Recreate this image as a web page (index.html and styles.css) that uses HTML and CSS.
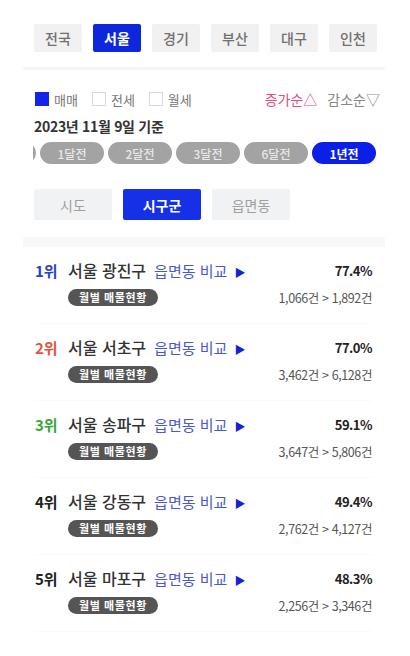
FILE: index.html
```html
<!DOCTYPE html>
<html lang="ko">
<head>
  <meta charset="UTF-8">
  <meta name="viewport" content="width=device-width, initial-scale=1.0">
  <title>매물 증감 순위</title>
  <link rel="stylesheet" href="styles.css">
</head>
<body>
  <div class="wrap">
    <nav class="regions">
      <a class="region">전국</a>
      <a class="region active">서울</a>
      <a class="region">경기</a>
      <a class="region">부산</a>
      <a class="region">대구</a>
      <a class="region">인천</a>
    </nav>
    <div class="rule"></div>

    <div class="filters">
      <label class="check checked"><span class="box"></span>매매</label>
      <label class="check"><span class="box"></span>전세</label>
      <label class="check"><span class="box"></span>월세</label>
      <div class="sort">
        <span class="sort-up">증가순△</span>
        <span class="sort-down">감소순▽</span>
      </div>
    </div>
    <p class="date">2023년 11월 9일 기준</p>

    <div class="periods">
      <div class="period-track">
        <span class="period"></span>
        <span class="period">1달전</span>
        <span class="period">2달전</span>
        <span class="period">3달전</span>
        <span class="period">6달전</span>
        <span class="period active">1년전</span>
      </div>
    </div>

    <div class="tabs">
      <a class="tab">시도</a>
      <a class="tab active">시구군</a>
      <a class="tab">읍면동</a>
    </div>
    <div class="rule thick"></div>

    <ul class="ranks">
      <li class="rank-item">
        <div class="rank-line">
          <span class="rank r1">1위</span>
          <span class="area">서울 광진구</span>
          <a class="compare">읍면동 비교 <span class="arrow">▶</span></a>
          <span class="rate">77.4%</span>
        </div>
        <div class="rank-sub">
          <span class="badge">월별 매물현황</span>
          <span class="counts">1,066건 &gt; 1,892건</span>
        </div>
      </li>
      <li class="rank-item">
        <div class="rank-line">
          <span class="rank r2">2위</span>
          <span class="area">서울 서초구</span>
          <a class="compare">읍면동 비교 <span class="arrow">▶</span></a>
          <span class="rate">77.0%</span>
        </div>
        <div class="rank-sub">
          <span class="badge">월별 매물현황</span>
          <span class="counts">3,462건 &gt; 6,128건</span>
        </div>
      </li>
      <li class="rank-item">
        <div class="rank-line">
          <span class="rank r3">3위</span>
          <span class="area">서울 송파구</span>
          <a class="compare">읍면동 비교 <span class="arrow">▶</span></a>
          <span class="rate">59.1%</span>
        </div>
        <div class="rank-sub">
          <span class="badge">월별 매물현황</span>
          <span class="counts">3,647건 &gt; 5,806건</span>
        </div>
      </li>
      <li class="rank-item">
        <div class="rank-line">
          <span class="rank">4위</span>
          <span class="area">서울 강동구</span>
          <a class="compare">읍면동 비교 <span class="arrow">▶</span></a>
          <span class="rate">49.4%</span>
        </div>
        <div class="rank-sub">
          <span class="badge">월별 매물현황</span>
          <span class="counts">2,762건 &gt; 4,127건</span>
        </div>
      </li>
      <li class="rank-item">
        <div class="rank-line">
          <span class="rank">5위</span>
          <span class="area">서울 마포구</span>
          <a class="compare">읍면동 비교 <span class="arrow">▶</span></a>
          <span class="rate">48.3%</span>
        </div>
        <div class="rank-sub">
          <span class="badge">월별 매물현황</span>
          <span class="counts">2,256건 &gt; 3,346건</span>
        </div>
      </li>
    </ul>
  </div>
</body>
</html>
```

FILE: styles.css
```css
body {
  margin: 0;
  background: #fff;
  color: #222;
  font-family: "Noto Sans CJK KR", "Noto Sans", sans-serif;
}

.wrap {
  width: 362px;
  margin-left: 23px;
  padding-top: 24px;
}

/* region buttons */
.regions {
  display: flex;
  gap: 11px;
  padding-left: 11px;
}

.region {
  width: 48px;
  height: 28px;
  display: flex;
  align-items: center;
  justify-content: center;
  background: #f1f1f1;
  color: #707070;
  font-size: 14px;
  font-weight: 500;
  border-radius: 2px;
}

.region.active {
  background: #0f27dc;
  color: #fff;
  font-weight: 700;
}

.rule {
  height: 3px;
  background: #f5f5f5;
  margin-top: 15px;
}

.rule.thick {
  height: 10px;
  background: #f8f8f8;
  margin-top: 17px;
}

/* deal type + sort */
.filters {
  display: flex;
  align-items: center;
  height: 16px;
  margin-top: 21px;
  padding-left: 12px;
  padding-right: 5px;
  font-size: 13px;
  color: #777;
}

.check {
  display: flex;
  align-items: center;
  gap: 5px;
  margin-right: 14px;
}

.box {
  width: 12px;
  height: 12px;
  border: 1px solid #d8d8d8;
  background: #fff;
}

.check.checked .box {
  background: #1326e8;
  border-color: #1326e8;
}

.sort {
  margin-left: auto;
  display: flex;
  gap: 10px;
  font-size: 14px;
}

.sort-up {
  color: #e24c86;
}

.sort-down {
  color: #888;
}

.date {
  margin: 10px 0 0 11px;
  font-size: 14px;
  font-weight: 700;
  color: #333;
  line-height: 18px;
  letter-spacing: -0.3px;
}

/* period pills, scrolled to the end */
.periods {
  margin: 7px 0 0 10px;
  overflow: hidden;
}

.period-track {
  display: flex;
  gap: 4px;
  margin-left: -61px;
}

.period {
  flex: 0 0 64px;
  height: 22px;
  border-radius: 11px;
  background: #a3a3a3;
  color: #e8e8e8;
  font-size: 12px;
  font-weight: 500;
  display: flex;
  align-items: center;
  justify-content: center;
}

.period.active {
  background: #0c1fe6;
  color: #fff;
  font-weight: 700;
}

/* level tabs */
.tabs {
  display: flex;
  gap: 11px;
  margin-top: 25px;
  padding-left: 11px;
}

.tab {
  width: 78px;
  height: 31px;
  display: flex;
  align-items: center;
  justify-content: center;
  background: #f1f2f4;
  color: #a0a0a0;
  font-size: 14px;
  border-radius: 2px;
}

.tab.active {
  background: #1530e6;
  color: #fff;
  font-weight: 700;
}

/* ranking list */
.ranks {
  list-style: none;
  margin: 0;
  padding: 0 13px 0 12px;
}

.rank-item {
  padding: 12px 0 14px;
  border-bottom: 1px solid #fafafa;
  height: 50px;
}

.rank-line {
  display: flex;
  align-items: center;
  height: 22px;
  font-size: 15px;
}

.rank {
  width: 33px;
  font-weight: 700;
  color: #222;
}

.rank.r1 { color: #2a43c4; }
.rank.r2 { color: #e0553f; }
.rank.r3 { color: #35a83a; }

.area {
  font-size: 16px;
  font-weight: 500;
  color: #333;
  margin-right: 8px;
}

.compare {
  color: #4a57d4;
  font-size: 15px;
}

.arrow {
  color: #1520d8;
  font-size: 11px;
  margin-left: 3px;
}

.rate {
  margin-left: auto;
  font-size: 13px;
  font-weight: 700;
  letter-spacing: -0.5px;
  color: #222;
}

.rank-sub {
  display: flex;
  align-items: center;
  margin-top: 7px;
  padding-left: 33px;
}

.badge {
  background: #555;
  color: #fff;
  font-size: 11px;
  font-weight: 700;
  letter-spacing: 0.6px;
  padding: 0 11px;
  height: 17px;
  line-height: 17px;
  border-radius: 9px;
}

.counts {
  margin-left: auto;
  font-size: 12.5px;
  color: #555;
  letter-spacing: -0.4px;
}
```
